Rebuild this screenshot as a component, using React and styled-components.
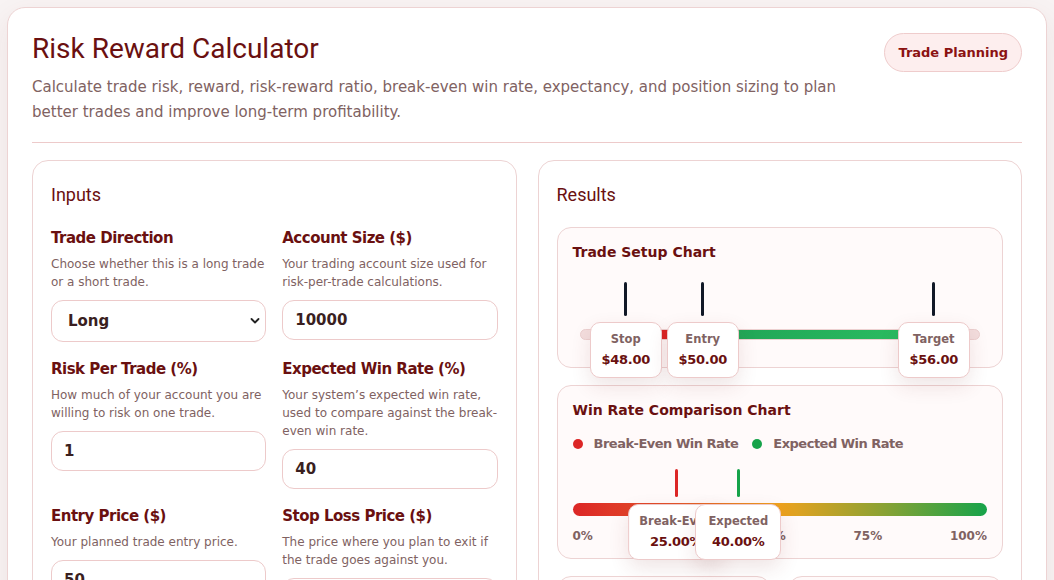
import React from 'react';
import styled, { createGlobalStyle } from 'styled-components';

const GlobalStyle = createGlobalStyle`
  html, body {
    margin: 0;
    padding: 0;
    background: #f8f3f3;
  }
  body {
    font-family: "DejaVu Sans", Verdana, sans-serif;
  }
  * {
    box-sizing: border-box;
  }
`;

const Page = styled.div`
  padding: 7px;
`;

const Shell = styled.div`
  background: #ffffff;
  border: 1px solid #edd3d3;
  border-radius: 18px;
  padding: 24px;
  box-shadow: 0 10px 30px rgba(120, 40, 40, 0.08);
`;

const Header = styled.header`
  display: flex;
  justify-content: space-between;
  align-items: flex-start;
  gap: 24px;
  padding-bottom: 17px;
  border-bottom: 1px solid #edcaca;
`;

const Title = styled.h1`
  margin: 0;
  font-family: Roboto, "Liberation Sans", sans-serif;
  font-weight: 400;
  font-size: 28px;
  line-height: 33px;
  color: #6a1010;
`;

const Intro = styled.p`
  margin: 10px 0 0;
  font-size: 15px;
  line-height: 25px;
  color: #806262;
  max-width: 830px;
`;

const Badge = styled.span`
  flex-shrink: 0;
  display: inline-flex;
  align-items: center;
  height: 39px;
  padding: 0 13px;
  border-radius: 20px;
  background: #fdeeee;
  border: 1px solid #efcccc;
  color: #8b1212;
  font-size: 13px;
  font-weight: 700;
  margin-top: 1px;
`;

const Columns = styled.div`
  display: grid;
  grid-template-columns: 1fr 1fr;
  gap: 21px;
  margin-top: 17px;
`;

const Panel = styled.section`
  border: 1px solid #edd3d3;
  border-radius: 16px;
  padding: 23px 18px 18px;
  background: #ffffff;
`;

const PanelTitle = styled.h2`
  margin: 0 0 21px;
  font-family: Roboto, "Liberation Sans", sans-serif;
  font-weight: 400;
  font-size: 18px;
  line-height: 22px;
  color: #6a1010;
`;

const FieldGrid = styled.div`
  display: grid;
  grid-template-columns: 1fr 1fr;
  column-gap: 16px;
  row-gap: 16px;
  align-items: start;
`;

const Field = styled.div`
  display: flex;
  flex-direction: column;
`;

const Label = styled.label`
  font-size: 15px;
  letter-spacing: -0.5px;
  font-weight: 700;
  line-height: 22px;
  color: #6a1010;
`;

const Hint = styled.p`
  margin: 6px 0 9px;
  font-size: 12px;
  line-height: 18px;
  color: #806262;
`;

const controlBase = `
  width: 100%;
  border: 1px solid #edcaca;
  border-radius: 12px;
  background: #ffffff;
  font-family: "DejaVu Sans", Verdana, sans-serif;
  font-size: 15px;
  font-weight: 700;
  color: #3a1f1f;
  outline: none;
`;

const Input = styled.input`
  ${controlBase}
  height: 40px;
  padding: 0 12px;
`;

const SelectWrap = styled.div`
  position: relative;
`;

const Select = styled.select`
  ${controlBase}
  height: 42px;
  padding: 0 16px;
  appearance: none;
`;

const Chevron = styled.svg`
  position: absolute;
  right: 6px;
  top: 17px;
  pointer-events: none;
`;

const ChartCard = styled.div`
  position: relative;
  border: 1px solid #edd3d3;
  border-radius: 14px;
  background: #fffafa;
  padding: 16px 15px ${(p) => (p.tight ? 14 : 17)}px;
  & + & {
    margin-top: 17px;
  }
`;

const ChartTitle = styled.h3`
  margin: 0;
  font-size: 14px;
  line-height: 17px;
  font-weight: 700;
  color: #6a1010;
`;

const SetupArea = styled.div`
  position: relative;
  height: 89px;
  margin: 0 7px 0 7px;
`;

const Tick = styled.div`
  position: absolute;
  top: ${(p) => p.top}px;
  width: 3px;
  height: ${(p) => p.h}px;
  margin-left: -1.5px;
  border-radius: 2px;
  background: ${(p) => p.color};
`;

const Track = styled.div`
  position: absolute;
  left: 0;
  right: 0;
  top: 68px;
  height: 11px;
  border-radius: 6px;
  background: #f3dede;
  border: 1px solid #ecd0d0;
`;

const Segment = styled.div`
  position: absolute;
  top: 0;
  bottom: 0;
  background: ${(p) => p.bg};
`;

const Marker = styled.div`
  position: absolute;
  top: ${(p) => p.top}px;
  transform: translateX(-50%);
  min-width: ${(p) => (p.wide ? 86 : 72)}px;
  padding: 8px 10px;
  border: 1px solid #edcaca;
  border-radius: 10px;
  background: #ffffff;
  box-shadow: 0 8px 20px rgba(120, 40, 40, 0.12);
  text-align: center;
  white-space: nowrap;
  z-index: 2;
`;

const MarkerName = styled.div`
  font-size: 11.5px;
  line-height: 16px;
  font-weight: 700;
  color: #806262;
`;

const MarkerValue = styled.div`
  margin-top: 4px;
  font-size: 13px;
  letter-spacing: -0.3px;
  line-height: 18px;
  font-weight: 700;
  color: #6a1010;
`;

const Legend = styled.div`
  display: flex;
  align-items: center;
  gap: 14px;
  margin-top: 17px;
`;

const LegendItem = styled.div`
  display: flex;
  align-items: center;
  gap: 11px;
  font-size: 13px;
  letter-spacing: -0.5px;
  font-weight: 700;
  color: #806262;
  line-height: 16px;
  &::before {
    content: '';
    width: 10px;
    height: 10px;
    border-radius: 50%;
    background: ${(p) => p.dot};
  }
`;

const RateArea = styled.div`
  position: relative;
  height: 47px;
  margin-top: 17px;
`;

const RateBar = styled.div`
  position: absolute;
  left: 0;
  right: 0;
  bottom: 0;
  height: 13px;
  border-radius: 7px;
  background: linear-gradient(90deg, #dc2626 0%, #e4562a 25%, #eea21e 50%, #8aa234 75%, #16a34a 100%);
`;

const Axis = styled.div`
  display: flex;
  justify-content: space-between;
  margin-top: 13px;
  font-size: 12px;
  line-height: 15px;
  font-weight: 700;
  color: #806262;
`;

const StatGrid = styled.div`
  display: grid;
  grid-template-columns: 1fr 1fr;
  gap: 17px;
  margin-top: 17px;
`;

const Stat = styled.div`
  border: 1px solid #edd3d3;
  border-radius: 14px;
  background: #fffafa;
  padding: 16px 15px;
`;

const StatLabel = styled.div`
  font-size: 12.5px;
  font-weight: 700;
  color: #806262;
`;

const StatValue = styled.div`
  margin-top: 6px;
  font-size: 18px;
  font-weight: 700;
  color: #6a1010;
`;

const fields = [
  { label: 'Account Size ($)', hint: 'Your trading account size used for risk-per-trade calculations.', value: '10000' },
  { label: 'Risk Per Trade (%)', hint: 'How much of your account you are willing to risk on one trade.', value: '1' },
  { label: 'Expected Win Rate (%)', hint: 'Your system\u2019s expected win rate, used to compare against the break-even win rate.', value: '40' },
  { label: 'Entry Price ($)', hint: 'Your planned trade entry price.', value: '50' },
  { label: 'Stop Loss Price ($)', hint: 'The price where you plan to exit if the trade goes against you.', value: '48' },
  { label: 'Target Price ($)', hint: 'The price where you plan to take profit.', value: '56' },
];

const trade = { stop: 48, entry: 50, target: 56 };
const spread = trade.target - trade.stop;
const low = trade.stop - spread * 0.15;
const high = trade.target + spread * 0.15;
const pos = (v) => `${((v - low) / (high - low)) * 100}%`;

const breakEven = 25;
const expected = 40;

const stats = [
  { label: 'Risk-Reward Ratio', value: '1 : 3.00' },
  { label: 'Position Size', value: '50 shares' },
  { label: 'Risk Amount', value: '$100.00' },
  { label: 'Expectancy', value: '$140.00' },
];

function App() {
  const setupMarkers = [
    { name: 'Stop', price: trade.stop },
    { name: 'Entry', price: trade.entry },
    { name: 'Target', price: trade.target },
  ];

  return (
    <Page>
      <GlobalStyle />
      <Shell>
        <Header>
          <div>
            <Title>Risk Reward Calculator</Title>
            <Intro>
              Calculate trade risk, reward, risk-reward ratio, break-even win rate, expectancy, and position sizing to plan
              better trades and improve long-term profitability.
            </Intro>
          </div>
          <Badge>Trade Planning</Badge>
        </Header>

        <Columns>
          <Panel>
            <PanelTitle>Inputs</PanelTitle>
            <FieldGrid>
              <Field>
                <Label>Trade Direction</Label>
                <Hint>Choose whether this is a long trade or a short trade.</Hint>
                <SelectWrap>
                  <Select defaultValue="long">
                    <option value="long">Long</option>
                    <option value="short">Short</option>
                  </Select>
                  <Chevron width="10" height="8" viewBox="0 0 10 8">
                    <polyline points="1.5,2 5,5.5 8.5,2" fill="none" stroke="#222" strokeWidth="1.8" strokeLinecap="round" strokeLinejoin="round" />
                  </Chevron>
                </SelectWrap>
              </Field>
              {fields.map((f) => (
                <Field key={f.label}>
                  <Label>{f.label}</Label>
                  <Hint>{f.hint}</Hint>
                  <Input defaultValue={f.value} />
                </Field>
              ))}
            </FieldGrid>
          </Panel>

          <Panel>
            <PanelTitle>Results</PanelTitle>

            <ChartCard>
              <ChartTitle>Trade Setup Chart</ChartTitle>
              <SetupArea>
                {setupMarkers.map((m) => (
                  <Tick key={m.name} top={21} h={34} color="#111827" style={{ left: pos(m.price) }} />
                ))}
                <Track>
                  <Segment bg="#dc2626" style={{ left: pos(trade.stop), width: `calc(${pos(trade.entry)} - ${pos(trade.stop)})` }} />
                  <Segment
                    bg="linear-gradient(90deg, #1fa255, #2cbf62)"
                    style={{ left: pos(trade.entry), width: `calc(${pos(trade.target)} - ${pos(trade.entry)})` }}
                  />
                </Track>
                {setupMarkers.map((m) => (
                  <Marker key={m.name} top={61} style={{ left: pos(m.price) }}>
                    <MarkerName>{m.name}</MarkerName>
                    <MarkerValue>${m.price.toFixed(2)}</MarkerValue>
                  </Marker>
                ))}
              </SetupArea>
            </ChartCard>

            <ChartCard tight>
              <ChartTitle>Win Rate Comparison Chart</ChartTitle>
              <Legend>
                <LegendItem dot="#dc2626">Break-Even Win Rate</LegendItem>
                <LegendItem dot="#16a34a">Expected Win Rate</LegendItem>
              </Legend>
              <RateArea>
                <Tick top={0} h={28} color="#dc2626" style={{ left: `${breakEven}%` }} />
                <Tick top={0} h={28} color="#16a34a" style={{ left: `${expected}%` }} />
                <RateBar />
                <Marker wide top={35} style={{ left: `${breakEven}%` }}>
                  <MarkerName>Break-Even</MarkerName>
                  <MarkerValue>{breakEven.toFixed(2)}%</MarkerValue>
                </Marker>
                <Marker wide top={35} style={{ left: `${expected}%` }}>
                  <MarkerName>Expected</MarkerName>
                  <MarkerValue>{expected.toFixed(2)}%</MarkerValue>
                </Marker>
              </RateArea>
              <Axis>
                <span>0%</span>
                <span>25%</span>
                <span>50%</span>
                <span>75%</span>
                <span>100%</span>
              </Axis>
            </ChartCard>

            <StatGrid>
              {stats.map((s) => (
                <Stat key={s.label}>
                  <StatLabel>{s.label}</StatLabel>
                  <StatValue>{s.value}</StatValue>
                </Stat>
              ))}
            </StatGrid>
          </Panel>
        </Columns>
      </Shell>
    </Page>
  );
}

export default App;
